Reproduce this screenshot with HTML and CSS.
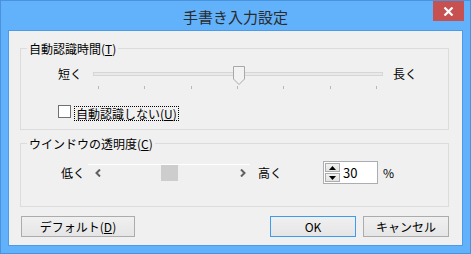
FILE: index.html
```html
<!DOCTYPE html>
<html lang="ja">
<head>
    <meta charset="UTF-8">
    <title>手書き入力設定</title>
    <link rel="stylesheet" href="styles.css">
</head>
<body>
    <div class="window">
        <div class="titlebar">
            <span class="title">手書き入力設定</span>
            <div class="close">
                <svg width="11" height="9" viewBox="0 0 11 9"><path d="M1.5 0.5 L9.5 8.5 M9.5 0.5 L1.5 8.5" stroke="#fff" stroke-width="2.2"/></svg>
            </div>
        </div>

        <div class="client">
            <!-- 自動認識時間 -->
            <div class="group group-time">
                <div class="legend">自動認識時間(<u>T</u>)</div>
                <div class="slider-row">
                    <span class="side-label">短く</span>
                    <div class="slider">
                        <div class="track"></div>
                        <svg class="thumb" width="12" height="19" viewBox="0 0 12 19">
                            <path d="M0.5 0.5 H11.5 V13 L6 18.5 L0.5 13 Z" fill="#f2f2f2" stroke="#a8a8a8"/>
                        </svg>
                        <div class="ticks">
                            <i></i><i></i><i></i><i></i><i></i><i></i><i></i>
                        </div>
                    </div>
                    <span class="side-label right">長く</span>
                </div>
                <div class="check-row">
                    <span class="checkbox"></span>
                    <span class="check-label">自動認識しない(<u>U</u>)</span>
                </div>
            </div>

            <!-- ウインドウの透明度 -->
            <div class="group group-alpha">
                <div class="legend">ウインドウの透明度(<u>C</u>)</div>
                <div class="alpha-row">
                    <span class="low-label">低く</span>
                    <div class="scrollbar">
                        <svg width="7" height="8" viewBox="0 0 7 8"><path d="M5 0.5 L1.5 4 L5 7.5" fill="none" stroke="#606060" stroke-width="2"/></svg>
                        <div class="sb-thumb"></div>
                        <svg width="7" height="8" viewBox="0 0 7 8"><path d="M2 0.5 L5.5 4 L2 7.5" fill="none" stroke="#606060" stroke-width="2"/></svg>
                    </div>
                    <span class="high-label">高く</span>
                    <div class="spin">
                        <div class="spin-btns">
                            <span class="spin-btn"><svg width="7" height="4" viewBox="0 0 7 4"><path d="M0 4 L3.5 0 L7 4 Z" fill="#000"/></svg></span>
                            <span class="spin-btn"><svg width="7" height="4" viewBox="0 0 7 4"><path d="M0 0 L3.5 4 L7 0 Z" fill="#000"/></svg></span>
                        </div>
                        <span class="spin-value">30</span>
                    </div>
                    <span class="percent">%</span>
                </div>
            </div>

            <div class="buttons">
                <button class="btn btn-default">デフォルト(<u>D</u>)</button>
                <span class="spacer"></span>
                <button class="btn btn-ok">OK</button>
                <button class="btn btn-cancel">キャンセル</button>
            </div>
        </div>
    </div>
</body>
</html>
```
FILE: styles.css
```css
* {
    box-sizing: border-box;
}

body {
    margin: 0;
    padding: 0;
    font-family: "Noto Sans CJK JP", "DejaVu Sans", sans-serif;
    font-size: 12px;
    color: #000;
}

.window {
    width: 471px;
    height: 254px;
    background-color: #62b1fb;
    border: 1px solid #4a93dc;
    display: flex;
    flex-direction: column;
}

.titlebar {
    height: 29px;
    position: relative;
    display: flex;
    align-items: center;
    justify-content: center;
}

.title {
    font-size: 15px;
    color: #2b2b2b;
    line-height: 18px;
    margin-top: 3px;
}

.close {
    position: absolute;
    top: 0;
    right: 6px;
    width: 31px;
    height: 20px;
    background-color: #c75050;
    display: flex;
    align-items: center;
    justify-content: center;
}

.client {
    margin: 0 7px 7px 7px;
    height: 216px;
    background-color: #f0f0f0;
    border: 1px solid #4d9be8;
    display: flex;
    flex-direction: column;
}

.group {
    margin-left: 11px;
    width: 429px;
    border: 1px solid #dcdcdc;
}

.group-time {
    margin-top: 17px;
    height: 82px;
    padding-left: 37px;
}

.group-alpha {
    margin-top: 13px;
    height: 64px;
    padding-left: 40px;
}

.legend {
    width: fit-content;
    line-height: 15px;
    padding: 0 2px;
    background-color: #f0f0f0;
    margin-top: -8px;
    margin-left: -31px;
}

.group-alpha .legend {
    margin-left: -34px;
}

/* スライダー */
.slider-row {
    display: flex;
    align-items: flex-start;
    margin-top: 10px;
    height: 24px;
}

.side-label {
    width: 35px;
    line-height: 15px;
}

.side-label.right {
    margin-left: 10px;
    width: auto;
}

.slider {
    position: relative;
    width: 290px;
    height: 24px;
}

.track {
    margin-top: 6px;
    height: 4px;
    background-color: #e7eaea;
    border: 1px solid #d6d6d6;
}

.thumb {
    position: absolute;
    left: 140px;
    top: 0;
}

.ticks {
    position: absolute;
    top: 20px;
    left: 5px;
    right: 6px;
    display: flex;
    justify-content: space-between;
}

.ticks i {
    width: 1px;
    height: 3px;
    background-color: #b8b8b8;
}

.check-row {
    display: flex;
    align-items: flex-start;
    margin-top: 15px;
}

.checkbox {
    width: 13px;
    height: 13px;
    background-color: #fff;
    border: 1px solid #707070;
}

.check-label {
    margin-left: 3px;
    margin-top: 1px;
    line-height: 13px;
    padding: 0 1px;
    border: 1px dotted #000;
}

/* 透明度 */
.alpha-row {
    display: flex;
    align-items: center;
    margin-top: 10px;
    height: 23px;
}

.low-label {
    width: 27px;
    line-height: 15px;
}

.scrollbar {
    width: 162px;
    height: 17px;
    border-top: 1px solid #fff;
    background-color: #f0f0f0;
    display: flex;
    align-items: center;
    justify-content: space-between;
    padding: 0 4px 0 7px;
    position: relative;
}

.sb-thumb {
    position: absolute;
    left: 73px;
    top: 0;
    width: 17px;
    height: 16px;
    background-color: #cdcdcd;
}

.high-label {
    margin-left: 8px;
    width: 65px;
    line-height: 15px;
}

.spin {
    width: 55px;
    height: 23px;
    background-color: #fff;
    border: 1px solid #abadb3;
    display: flex;
    align-items: center;
    padding-left: 1px;
}

.spin-btns {
    display: flex;
    flex-direction: column;
    gap: 1px;
}

.spin-btn {
    width: 15px;
    height: 9px;
    background: linear-gradient(#f2f2f2, #e3e3e3);
    border: 1px solid #acacac;
    display: flex;
    align-items: center;
    justify-content: center;
}

.spin-value {
    margin-left: 3px;
    font-size: 13px;
    line-height: 15px;
}

.percent {
    margin-left: 5px;
}

/* ボタン */
.buttons {
    display: flex;
    margin-top: 9px;
    padding-left: 12px;
    padding-right: 13px;
}

.spacer {
    flex: 1;
}

.btn {
    height: 21px;
    font-family: inherit;
    font-size: 12px;
    line-height: 15px;
    padding: 0;
    background: linear-gradient(#f0f0f0, #e5e5e5);
    border: 1px solid #acacac;
    color: #000;
}

.btn-default {
    width: 114px;
}

.btn-ok {
    width: 86px;
    border-color: #3c9cf0;
}

.btn-cancel {
    width: 86px;
    margin-left: 7px;
}
```
